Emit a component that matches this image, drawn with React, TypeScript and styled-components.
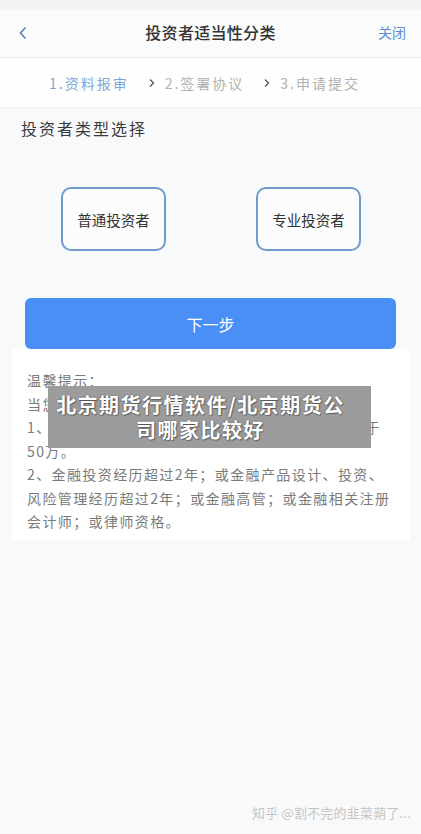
import React from 'react';
import styled, { createGlobalStyle } from 'styled-components';

const GlobalStyle = createGlobalStyle`
  html, body {
    margin: 0;
    padding: 0;
    background: #f8f9fa;
  }
  body {
    font-family: 'Noto Sans CJK SC', 'Noto Sans', sans-serif;
  }
`;

const Page = styled.div`
  position: relative;
  width: 421px;
  min-height: 834px;
  background: #f8f9fa;
  overflow: hidden;
`;

const StatusStrip = styled.div`
  height: 10px;
  background: #f3f3f3;
`;

const Header = styled.div`
  height: 47px;
  display: grid;
  grid-template-columns: 60px 1fr 60px;
  align-items: center;
  background: #fbfbfb;
  border-bottom: 1px solid #ececec;
`;

const BackButton = styled.div`
  display: flex;
  align-items: center;
  padding-left: 17px;
  margin-bottom: 2px;
`;

const Title = styled.div`
  text-align: center;
  font-size: 16px;
  line-height: 20px;
  font-weight: 500;
  color: #333;
  letter-spacing: 0.3px;
  margin-bottom: 3px;
`;

const CloseLink = styled.div`
  text-align: right;
  padding-right: 15px;
  font-size: 14px;
  line-height: 18px;
  color: #5b8fd0;
  margin-bottom: 3px;
`;

const Steps = styled.div`
  height: 50px;
  display: flex;
  align-items: center;
  justify-content: center;
  background: #fefefe;
  border-bottom: 1px solid #f2f2f2;
  padding-right: 12px;
  box-sizing: border-box;
`;

const Step = styled.span<{ $active?: boolean }>`
  font-size: 14px;
  line-height: 18px;
  letter-spacing: 2px;
  color: ${({ $active }) => ($active ? '#7ea6d6' : '#b2b2b2')};
`;

const Chevron = styled.span`
  display: flex;
  align-items: center;
  margin: 0 8px 0 18px;
`;

const Section = styled.div`
  padding: 9px 0 0;
`;

const SectionTitle = styled.div`
  padding-left: 21px;
  font-size: 16px;
  line-height: 22px;
  letter-spacing: 2px;
  color: #3a3a3a;
`;

const Choices = styled.div`
  display: flex;
  justify-content: space-between;
  padding: 48px 60px 0 61px;
`;

const Choice = styled.div`
  box-sizing: border-box;
  width: 105px;
  height: 64px;
  border: 2px solid #6f9bcb;
  border-radius: 10px;
  display: flex;
  align-items: center;
  justify-content: center;
  font-size: 14.5px;
  color: #333;
  background: #fcfcfd;
`;

const NextButton = styled.div`
  margin: 47px 25px 0;
  height: 51px;
  border-radius: 6px;
  background: #498ff5;
  color: #fff;
  font-size: 16px;
  display: flex;
  align-items: center;
  justify-content: center;
`;

const NoticeCard = styled.div`
  position: relative;
  margin: 0 11px 0 12px;
  padding: 20px 10px 6px 15px;
  background: #fff;
`;

const NoticeLine = styled.div`
  font-size: 14px;
  line-height: 23.5px;
  letter-spacing: 1.4px;
  color: #7a7a7a;
  white-space: nowrap;
`;

const Overlay = styled.div`
  position: absolute;
  left: 36px;
  top: 37px;
  width: 323px;
  height: 62px;
  padding-right: 18px;
  box-sizing: border-box;
  background: #9c9c9c;
  display: flex;
  align-items: center;
  justify-content: center;
`;

const OverlayText = styled.div`
  font-size: 20px;
  line-height: 25px;
  font-weight: 700;
  letter-spacing: 1.5px;
  color: #fff;
  text-shadow: 0 0 2px rgba(0, 0, 0, 0.45), 1px 1px 1px rgba(0, 0, 0, 0.3);
  text-align: center;
  white-space: nowrap;
`;

const Watermark = styled.div`
  position: absolute;
  right: 10px;
  bottom: 12px;
  font-size: 13px;
  color: #c4c4c4;
  text-shadow: 0 0 1px #fff;
  letter-spacing: 0.2px;
`;

const ChevronIcon = ({ color, size }: { color: string; size: number }) => (
  <svg width={size} height={size} viewBox="0 0 10 10">
    <path d="M3 1.5 L6.5 5 L3 8.5" fill="none" stroke={color} strokeWidth="1.3" />
  </svg>
);

const notice = [
  '温馨提示：',
  '当您符合以下条件之一可申请专业投资者(需盖章)：',
  '1、金融资产大于300万或最近3年个人年均收入大于',
  '50万。',
  '2、金融投资经历超过2年；或金融产品设计、投资、',
  '风险管理经历超过2年；或金融高管；或金融相关注册',
  '会计师；或律师资格。',
];

export default function App() {
  return (
    <Page>
      <GlobalStyle />
      <StatusStrip />
      <Header>
        <BackButton>
          <svg width="12" height="16" viewBox="0 0 12 16">
            <path d="M8.5 2.5 L3.5 8 L8.5 13.5" fill="none" stroke="#5a7fb8" strokeWidth="1.6" />
          </svg>
        </BackButton>
        <Title>投资者适当性分类</Title>
        <CloseLink>关闭</CloseLink>
      </Header>
      <Steps>
        <Step $active>1.资料报审</Step>
        <Chevron>
          <ChevronIcon color="#555" size={10} />
        </Chevron>
        <Step>2.签署协议</Step>
        <Chevron>
          <ChevronIcon color="#555" size={10} />
        </Chevron>
        <Step>3.申请提交</Step>
      </Steps>
      <Section>
        <SectionTitle>投资者类型选择</SectionTitle>
        <Choices>
          <Choice>普通投资者</Choice>
          <Choice>专业投资者</Choice>
        </Choices>
        <NextButton>下一步</NextButton>
        <NoticeCard>
          {notice.map((line, i) => (
            <NoticeLine key={i}>{line}</NoticeLine>
          ))}
          <Overlay>
            <OverlayText>
              北京期货行情软件/北京期货公
              <br />
              司哪家比较好
            </OverlayText>
          </Overlay>
        </NoticeCard>
      </Section>
      <Watermark>知乎 @割不完的韭菜蒴了...</Watermark>
    </Page>
  );
}
